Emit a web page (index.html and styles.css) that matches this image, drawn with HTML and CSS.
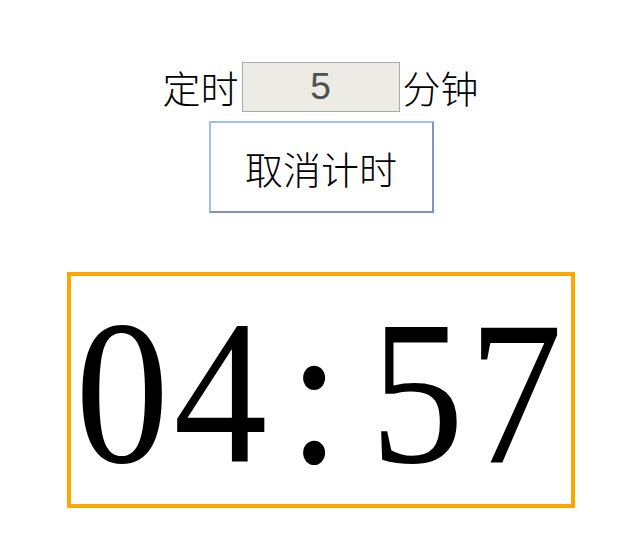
FILE: index.html
```html
<!DOCTYPE html>
<html lang="zh">
<head>
<meta charset="utf-8">
<title>定时</title>
<link rel="stylesheet" href="styles.css">
</head>
<body>
<div class="page">
  <div class="row">
    <span class="label">定时</span>
    <input class="minutes" type="text" value="5">
    <span class="label">分钟</span>
  </div>
  <button class="cancel" type="button">取消计时</button>
  <div class="clock"><span class="time">04<span class="colon">:</span>57</span></div>
</div>
</body>
</html>
```
FILE: styles.css
```css
html, body {
  margin: 0;
  padding: 0;
  background: #ffffff;
}
.page {
  width: 642px;
  display: flex;
  flex-direction: column;
  align-items: center;
  padding-top: 62px;
  font-family: "Noto Sans CJK SC", sans-serif;
}
.row {
  display: flex;
  align-items: center;
  height: 50px;
  gap: 3px;
  margin-left: -1px;
}
.label {
  font-size: 38px;
  font-weight: 300;
  line-height: 50px;
  color: #000;
}
.minutes {
  box-sizing: border-box;
  width: 158px;
  height: 50px;
  margin: 0;
  padding: 0;
  border: 1px solid #a9a9a9;
  background: #ecebe4;
  color: #505050;
  font-family: "Liberation Sans", sans-serif;
  font-size: 37px;
  text-align: center;
  outline: none;
}
.cancel {
  box-sizing: border-box;
  margin-top: 9px;
  width: 225px;
  height: 92px;
  padding: 0;
  background: #ffffff;
  border: 2px solid;
  border-color: #a3bdec #8193c2 #8193c2 #a3bdec;
  font-family: "Noto Sans CJK SC", sans-serif;
  font-size: 38px;
  font-weight: 300;
  color: #000;
}
.clock {
  box-sizing: border-box;
  margin-top: 59px;
  width: 508px;
  height: 236px;
  border: 4px solid #ffa500;
  display: flex;
  align-items: center;
  justify-content: center;
  font-family: "Liberation Serif", serif;
  font-size: 206px;
  line-height: 1;
  color: #000;
  padding-top: 6px;
  overflow: hidden;
}
.time {
  display: inline-block;
  white-space: nowrap;
  letter-spacing: 5px;
  transform: scaleX(0.91);
}
.colon {
  margin: 0 28px 0 18px;
}
```
